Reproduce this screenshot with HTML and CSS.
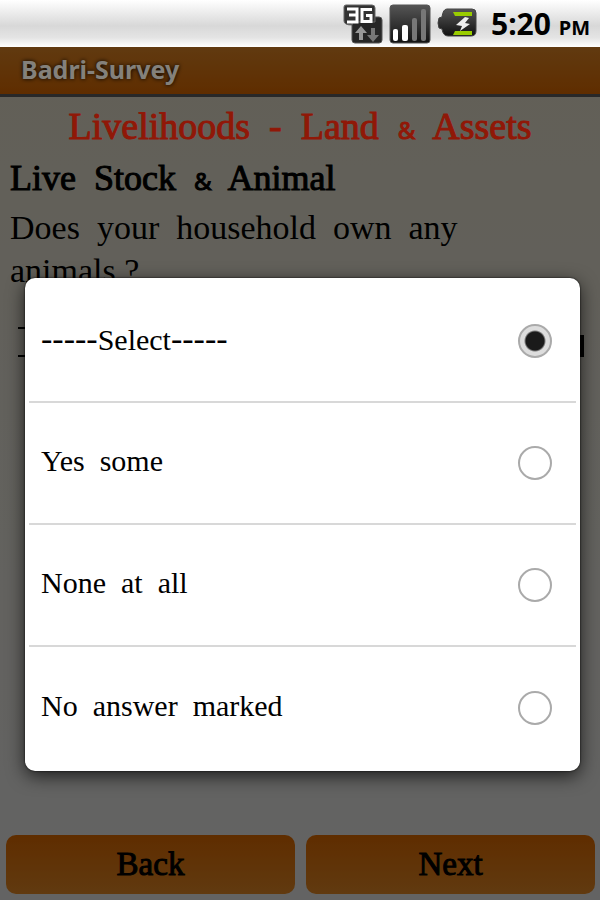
FILE: index.html
```
<!DOCTYPE html>
<html lang="en">
<head>
  <meta charset="UTF-8">
  <meta name="viewport" content="width=device-width, initial-scale=1.0">
  <title>Badri-Survey</title>
  <link rel="stylesheet" href="styles.css">
</head>
<body>

<div class="statusbar">
  <svg width="40" height="40" viewBox="0 0 40 40">
    <path d="M9 13h27q3 0 3 3v20q0 3-3 3H12q-3 0-3-3z" fill="#262626" stroke="#555"/>
    <path d="M3 1h26q3 0 3 3v14h-23v3q-8 0-8-4V3q0-2 2-2z" fill="#333" stroke="#666"/>
    <path d="M4 5h10v13H4M6 11h8M29 5.500H19v12h9v-6h-5" fill="none" stroke="#fff" stroke-width="3"/>
    <path d="M18 22l6 7h-4v7h-4v-7h-4z" fill="#999"/>
    <path d="M30 38l-6-7h4v-7h4v7h4z" fill="#777"/>
  </svg>
  <svg width="42" height="40" viewBox="0 0 42 40">
    <defs>
      <linearGradient id="dark" x1="0" y1="0" x2="0" y2="1">
        <stop offset="0" stop-color="#555"/>
        <stop offset="1" stop-color="#111"/>
      </linearGradient>
    </defs>
    <rect x="1" y="1" width="40" height="38" rx="3" fill="url(#dark)" stroke="#555"/>
    <rect x="4" y="25" width="5" height="12" rx="2" fill="#fff"/>
    <rect x="13" y="21" width="6" height="16" rx="2" fill="#fff"/>
    <rect x="23" y="14" width="5" height="23" rx="2" fill="#777"/>
    <rect x="32" y="5" width="5" height="32" rx="2" fill="#777"/>
  </svg>
  <svg width="42" height="40" viewBox="0 0 42 40">
    <path d="M10 5h25q4 0 4 4v18q0 5-5 5H11q-5 0-6-7l-3-1q-2-5 0-10l3-1q1-8 5-8z" fill="url(#dark)" stroke="#444"/>
    <path d="M16 8h19v4H18z" fill="#9c0"/>
    <path d="M16 31h19v-4H18z" fill="#9c0"/>
    <path d="M28 13l-9 8 6 1-2 5 10-7-5-1 4-5z" fill="#eee"/>
  </svg>
  <div class="clock">5:20 <small>PM</small></div>
</div>

<div class="app">
  <div class="appbar">Badri-Survey</div>

  <div class="page">
    <h1>Livelihoods&nbsp; -&nbsp; Land&nbsp; <span class="amp">&amp;</span>&nbsp; Assets</h1>
    <h2>Live&nbsp; Stock&nbsp; <span class="amp">&amp;</span>&nbsp; Animal</h2>
    <label class="question" for="animals">Does&nbsp; your&nbsp; household&nbsp; own&nbsp; any<br>animals ?</label>
    <div class="spinner">
      <select id="animals">
        <option>-----Select-----</option>
      </select>
      <span class="handle"></span>
    </div>
  </div>

  <div class="buttons">
    <button type="button">Back</button>
    <button type="button">Next</button>
  </div>

  <div class="overlay">
    <form class="dialog">
      <label class="option">
        <span><span class="dash">-----</span>Select<span class="dash">-----</span></span>
        <input type="radio" name="answer" checked>
      </label>
      <label class="option">
        <span>Yes&nbsp; some</span>
        <input type="radio" name="answer">
      </label>
      <label class="option">
        <span>None&nbsp; at&nbsp; all</span>
        <input type="radio" name="answer">
      </label>
      <label class="option">
        <span>No&nbsp; answer&nbsp; marked</span>
        <input type="radio" name="answer">
      </label>
    </form>
  </div>
</div>

</body>
</html>
```

FILE: styles.css
```
* {
  box-sizing: border-box;
}

body {
  margin: 0;
  min-height: 100vh;
  display: flex;
  flex-direction: column;
  font-family: "Liberation Serif", serif;
  color: #000;
}

.statusbar {
  height: 47px;
  padding-right: 10px;
  display: flex;
  align-items: center;
  justify-content: flex-end;
  gap: 6px;
  background: linear-gradient(#fff, #d8d8d8 55%, #e4e4e4 80%, #fff);
}

.clock {
  margin-left: 6px;
  font: bold 30px "Noto Sans", sans-serif;
}

.clock small {
  font-size: 20px;
}

.app {
  position: relative;
  flex: 1;
  display: flex;
  flex-direction: column;
  background: linear-gradient(#a39f91, #a6a6a6);
}

.appbar {
  height: 50px;
  padding-left: 21px;
  border-bottom: 3px solid #444;
  background: linear-gradient(#a2611b, #9f4c00);
  color: #ddd8ce;
  font: bold 25px/45px "Noto Sans", sans-serif;
  text-shadow: 0 0 4px #000;
}

.page {
  flex: 1;
  padding: 4px 10px;
}

h1,
h2 {
  margin: 0;
  font-weight: normal;
  -webkit-text-stroke: 1px;
}

h1 {
  color: #f0280c;
  font-size: 38px;
  line-height: 50px;
  text-align: center;
}

h2 {
  margin-bottom: 2px;
  font-size: 36px;
  line-height: 46px;
}

.amp {
  font-family: "Noto Sans", sans-serif;
  font-size: 24px;
}

.question {
  display: block;
  font-size: 34px;
  line-height: 43px;
}

.spinner {
  display: flex;
  align-items: flex-end;
  margin: 35px 6px 0 8px;
}

.spinner select {
  flex: 1;
  height: 30px;
  padding: 0 12px;
  border: solid #000;
  border-width: 2px 0;
  border-radius: 0;
  background: none;
  appearance: none;
  font: 22px "Liberation Serif", serif;
}

.handle {
  width: 4px;
  height: 22px;
  background: #000;
}

.buttons {
  display: flex;
  gap: 11px;
  padding: 0 5px 6px 6px;
}

.buttons button {
  flex: 1;
  height: 59px;
  border: 0;
  border-radius: 10px;
  background: linear-gradient(#9f4c00, #a2611b);
  color: #000;
  font: 33px "Liberation Serif", serif;
  -webkit-text-stroke: 1px;
}

.overlay {
  position: absolute;
  inset: 0;
  padding: 231px 20px 0 25px;
  background: rgba(0, 0, 0, 0.4);
}

.dialog {
  padding: 3px 4px 2px;
  border-radius: 10px;
  background: #fff;
  box-shadow: 0 5px 18px rgba(0, 0, 0, 0.7), 0 0 2px #000;
}

.option {
  display: flex;
  align-items: center;
  justify-content: space-between;
  height: 122px;
  padding: 0 24px 0 12px;
  border-bottom: 2px solid #d8d8d8;
  font-size: 30px;
}

.option > span {
  padding-bottom: 4px;
}

.option:last-child {
  border-bottom: 0;
}

.dash {
  font-size: 34px;
}

.option input {
  appearance: none;
  width: 34px;
  height: 34px;
  margin: 0;
  border: 2px solid #aaa;
  border-radius: 50%;
}

.option input:checked {
  background: radial-gradient(circle, #1a1a1a 9px, #ddd 11px);
}
```
